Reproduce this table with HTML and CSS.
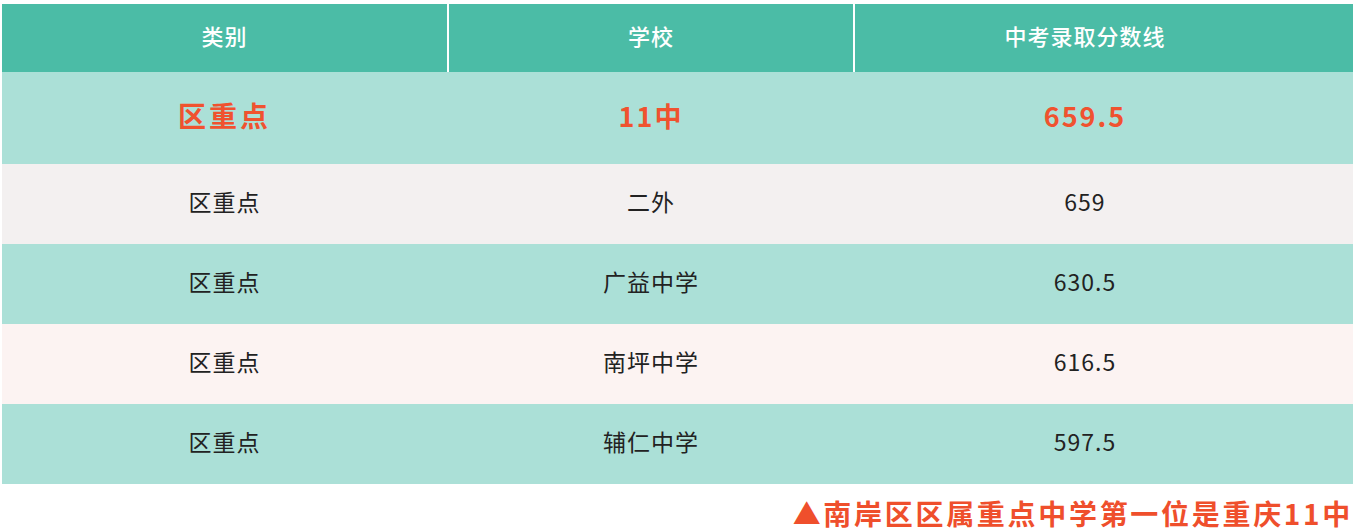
FILE: index.html
```html
<!DOCTYPE html>
<html lang="zh">
<head>
<meta charset="utf-8">
<link rel="stylesheet" href="styles.css">
</head>
<body>
<div class="page">
  <div class="table">
    <div class="row head">
      <div class="cell c1">类别</div>
      <div class="cell c2">学校</div>
      <div class="cell c3">中考录取分数线</div>
    </div>
    <div class="row teal top">
      <div class="cell c1 cjk">区重点</div>
      <div class="cell c2">11中</div>
      <div class="cell c3">659.5</div>
    </div>
    <div class="row grey">
      <div class="cell c1">区重点</div>
      <div class="cell c2">二外</div>
      <div class="cell c3">659</div>
    </div>
    <div class="row teal">
      <div class="cell c1">区重点</div>
      <div class="cell c2">广益中学</div>
      <div class="cell c3">630.5</div>
    </div>
    <div class="row pink">
      <div class="cell c1">区重点</div>
      <div class="cell c2">南坪中学</div>
      <div class="cell c3">616.5</div>
    </div>
    <div class="row teal">
      <div class="cell c1">区重点</div>
      <div class="cell c2">辅仁中学</div>
      <div class="cell c3">597.5</div>
    </div>
  </div>
  <div class="caption">▲南岸区区属重点中学第一位是重庆11中</div>
</div>
</body>
</html>
```

FILE: styles.css
```css
html, body {
  margin: 0;
  padding: 0;
  background: #ffffff;
}
body {
  font-family: "Noto Sans CJK SC", "Noto Sans", sans-serif;
  color: #222222;
}
.page {
  width: 1358px;
  height: 532px;
  padding: 4px 5px 0 2px;
  box-sizing: border-box;
  display: flex;
  flex-direction: column;
}
.table {
  display: flex;
  flex-direction: column;
}
.row {
  display: grid;
  grid-template-columns: 445px 404px 1fr;
  column-gap: 2px;
  height: 80px;
}
.cell {
  display: flex;
  align-items: center;
  justify-content: center;
  font-size: 23px;
  letter-spacing: 1px;
  padding-bottom: 6px;
  box-sizing: border-box;
}
.cell.c3 {
  padding-right: 38px;
}
.head {
  height: 68px;
  background: #ffffff;
}
.head .cell {
  background: #4bbca6;
  color: #ffffff;
  font-weight: 500;
  font-size: 22px;
}
.teal {
  background: #abe0d7;
}
.grey {
  background: #f3f0f0;
}
.pink {
  background: #fcf3f2;
}
.top {
  height: 92px;
}
.top .cell {
  color: #f0522f;
  font-weight: 700;
  font-size: 27px;
  letter-spacing: 2px;
}
.top .cell.cjk {
  font-size: 28px;
  letter-spacing: 3px;
}
.caption {
  margin-top: 12px;
  align-self: flex-end;
  color: #ef4f2c;
  font-weight: 700;
  font-size: 28px;
  line-height: 34px;
  letter-spacing: 2.7px;
}
```
